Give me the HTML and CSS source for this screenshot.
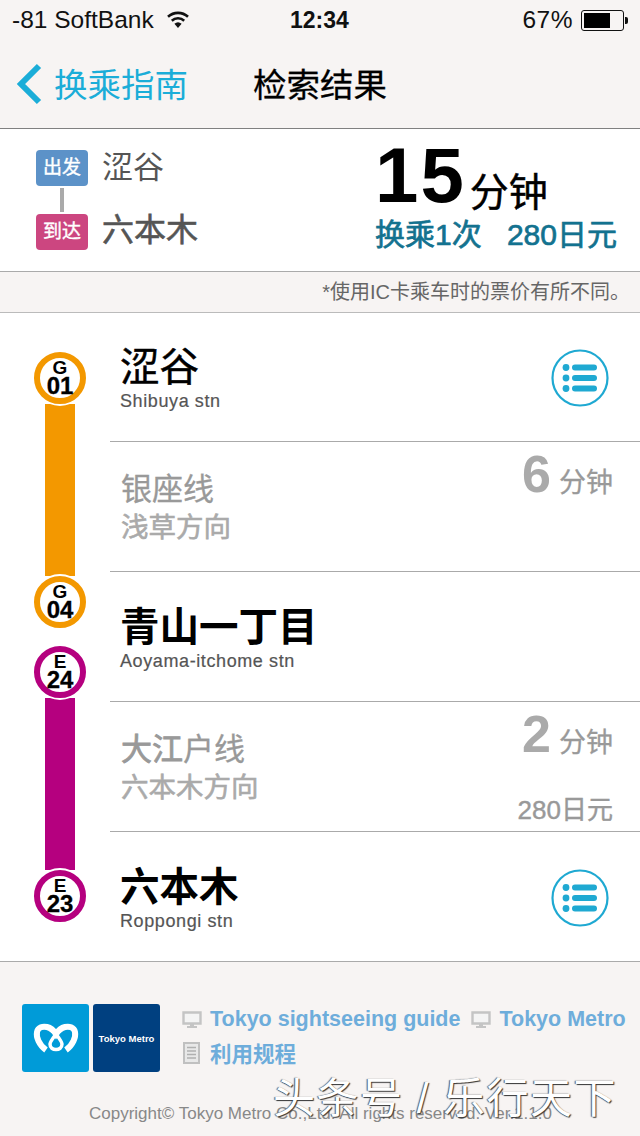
FILE: index.html
```html
<!DOCTYPE html>
<html lang="en">
<head>
    <meta charset="UTF-8">
    <meta name="viewport" content="width=device-width, initial-scale=1.0">
    <title>检索结果</title>
    <link rel="stylesheet" href="styles.css">
</head>
<body>
<div class="page">

    <div class="status">
        <div class="status-left">
            <span>-81 SoftBank</span>
            <svg class="wifi" width="24" height="18" viewBox="0 0 24 18"><path d="M12 17l-3.6-4.2a5.4 5.4 0 0 1 7.2 0z" fill="#111"/><path d="M5.8 9.8a9 9 0 0 1 12.4 0" fill="none" stroke="#111" stroke-width="2.6"/><path d="M2 5.8a14.6 14.6 0 0 1 20 0" fill="none" stroke="#111" stroke-width="2.6"/></svg>
        </div>
        <div class="status-time">12:34</div>
        <div class="status-right">
            <span>67%</span>
            <div class="battery"><div class="battery-fill"></div></div>
            <div class="battery-tip"></div>
        </div>
    </div>

    <div class="nav">
        <div class="back">
            <svg width="28" height="42" viewBox="0 0 28 42"><path d="M24 3L6 21l18 18" fill="none" stroke="#1badd8" stroke-width="6"/></svg>
            <span>换乘指南</span>
        </div>
        <div class="nav-title">检索结果</div>
    </div>

    <div class="summary">
        <div class="stops">
            <div class="stop">
                <span class="tag tag-dep">出发</span>
                <span class="stop-name light">涩谷</span>
            </div>
            <div class="stop-link"></div>
            <div class="stop">
                <span class="tag tag-arr">到达</span>
                <span class="stop-name">六本木</span>
            </div>
        </div>
        <div class="totals">
            <div class="total-time"><span class="total-num">15</span><span class="total-unit">分钟</span></div>
            <div class="total-info"><span>换乘1次</span><span>280日元</span></div>
        </div>
    </div>

    <div class="note">*使用IC卡乘车时的票价有所不同。</div>

    <div class="route">
        <div class="rail">
            <div class="badge badge-g"><span>G</span><span>01</span></div>
            <div class="line line-g"></div>
            <div class="badge badge-g"><span>G</span><span>04</span></div>
            <div class="badge badge-e badge-next"><span>E</span><span>24</span></div>
            <div class="line line-e"></div>
            <div class="badge badge-e"><span>E</span><span>23</span></div>
        </div>
        <div class="rows">
            <div class="row station">
                <div class="station-name">涩谷</div>
                <div class="station-en">Shibuya stn</div>
                <svg class="list-btn" width="60" height="60" viewBox="0 0 60 60"><circle cx="30" cy="30" r="27.5" fill="#fff" stroke="#1fa9d2" stroke-width="2.2"/><g fill="#1fa9d2"><circle cx="16" cy="19.5" r="3.4"/><circle cx="16" cy="30" r="3.4"/><circle cx="16" cy="40.5" r="3.4"/><rect x="22" y="16.5" width="25" height="6" rx="3"/><rect x="22" y="27" width="25" height="6" rx="3"/><rect x="22" y="37.5" width="25" height="6" rx="3"/></g></svg>
            </div>
            <div class="row leg">
                <div class="leg-name">银座线</div>
                <div class="leg-dir">浅草方向</div>
                <div class="leg-time"><span class="leg-num">6</span><span class="leg-unit">分钟</span></div>
            </div>
            <div class="row station">
                <div class="station-name strong">青山一丁目</div>
                <div class="station-en">Aoyama-itchome stn</div>
            </div>
            <div class="row leg">
                <div class="leg-name"><span class="leg-strong">大江</span>户线</div>
                <div class="leg-dir">六本木方向</div>
                <div class="leg-time"><span class="leg-num">2</span><span class="leg-unit">分钟</span></div>
                <div class="leg-fare">280日元</div>
            </div>
            <div class="row station">
                <div class="station-name strong">六本木</div>
                <div class="station-en">Roppongi stn</div>
                <svg class="list-btn" width="60" height="60" viewBox="0 0 60 60"><circle cx="30" cy="30" r="27.5" fill="#fff" stroke="#1fa9d2" stroke-width="2.2"/><g fill="#1fa9d2"><circle cx="16" cy="19.5" r="3.4"/><circle cx="16" cy="30" r="3.4"/><circle cx="16" cy="40.5" r="3.4"/><rect x="22" y="16.5" width="25" height="6" rx="3"/><rect x="22" y="27" width="25" height="6" rx="3"/><rect x="22" y="37.5" width="25" height="6" rx="3"/></g></svg>
            </div>
        </div>
    </div>

    <div class="footer">
        <div class="footer-top">
            <div class="logos">
                <div class="logo logo-mark">
                    <svg width="46" height="30" viewBox="0 0 46 30"><path d="M13 27C6 22 3 14 4 9 5 4 10 3 14 4c4 1 7 4 9 7 2-3 5-6 9-7 4-1 9 0 10 5 1 5-2 13-9 18" fill="none" stroke="#fff" stroke-width="6"/><path d="M23 11c-3 4-6 8-6 10 0 4 3 5.500 6 5.500s6-1.500 6-5.500c0-2-3-6-6-10z" fill="none" stroke="#fff" stroke-width="3.500"/></svg>
                </div>
                <div class="logo logo-name">Tokyo Metro</div>
            </div>
            <div class="links">
                <div class="link-row">
                    <svg class="icon" width="20" height="18" viewBox="0 0 20 18"><path d="M1.500 1.500h17v11h-17z" fill="#f4f4f4" stroke="#c4c4c4" stroke-width="2.400"/><path d="M8 13h4v2h3v2H5v-2h3z" fill="#c4c4c4"/></svg>
                    <span class="link">Tokyo sightseeing guide</span>
                    <svg class="icon" width="20" height="18" viewBox="0 0 20 18"><path d="M1.500 1.500h17v11h-17z" fill="#f4f4f4" stroke="#c4c4c4" stroke-width="2.400"/><path d="M8 13h4v2h3v2H5v-2h3z" fill="#c4c4c4"/></svg>
                    <span class="link">Tokyo Metro</span>
                </div>
                <div class="link-row">
                    <svg class="icon" width="20" height="22" viewBox="0 0 20 22"><path d="M2 1h15v20H2z" fill="#e8e8e8" stroke="#c0c0c0" stroke-width="2"/><path d="M5 5.500h9M5 9h9M5 12.500h9M5 16h9" stroke="#b0b0b0" stroke-width="1.600"/></svg>
                    <span class="link">利用规程</span>
                </div>
            </div>
        </div>
        <div class="copyright">Copyright© Tokyo Metro Co.,Ltd. All rights reserved. Ver.1.1.0</div>
    </div>

    <div class="watermark">头条号 / 乐行天下</div>
</div>
</body>
</html>
```

FILE: styles.css
```css
* {
    box-sizing: border-box;
}
html, body {
    margin: 0;
    padding: 0;
}
body {
    font-family: "Liberation Sans", "Noto Sans CJK SC", sans-serif;
    color: #000;
    background: #fff;
}
.page {
    position: relative;
    width: 640px;
    height: 1136px;
    overflow: hidden;
}

/* status bar + nav */
.status {
    height: 40px;
    padding: 0 12px 0 12px;
    display: flex;
    align-items: center;
    justify-content: space-between;
    position: relative;
    background: #f7f4f3;
    font-size: 24.500px;
    color: #111;
}
.status-left, .status-right {
    display: flex;
    align-items: center;
}
.wifi {
    margin-left: 12px;
}
.status-time {
    position: absolute;
    left: 290px;
    top: 7px;
    font-size: 23px;
    font-weight: bold;
}
.status-right span {
    margin-right: 8px;
    letter-spacing: 0.5px;
}
.battery {
    width: 43px;
    height: 21px;
    border: 1.500px solid #111;
    border-radius: 3px;
    padding: 2px;
}
.battery-fill {
    width: 26px;
    height: 100%;
    background: #000;
}
.battery-tip {
    width: 3px;
    height: 7px;
    margin-left: 1px;
    background: #111;
    border-radius: 0 2px 2px 0;
}
.nav {
    height: 89px;
    padding: 0 0 0 15px;
    display: flex;
    align-items: center;
    position: relative;
    background: #f7f4f3;
    border-bottom: 1px solid #808080;
}
.back {
    display: flex;
    align-items: center;
    gap: 11px;
    color: #1badd8;
    font-size: 33.500px;
}
.back span {
    margin-top: -4px;
}
.nav-title {
    position: absolute;
    left: 253px;
    top: 25px;
    font-size: 33.500px;
    line-height: 42px;
    -webkit-text-stroke: 0.3px #000;
}

/* summary */
.summary {
    height: 142px;
    display: flex;
    justify-content: space-between;
    padding: 21px 23px 0 36px;
}
.stop {
    display: flex;
    align-items: center;
    height: 36px;
}
.stop-link {
    width: 4px;
    height: 28px;
    margin: 0 0 0 24px;
    padding: 2px 0;
    background: #aaa;
    background-clip: content-box;
}
.tag {
    width: 52px;
    height: 36px;
    border-radius: 4px;
    color: #fff;
    font-size: 19px;
    line-height: 35px;
    text-align: center;
    -webkit-text-stroke: 0.4px #fff;
}
.tag-dep {
    background: #5c92c8;
}
.tag-arr {
    background: #cc4680;
}
.stop-name {
    margin: -5px 0 0 14px;
    font-size: 32px;
    line-height: 40px;
    color: #555;
    -webkit-text-stroke: 0.6px #555;
}
.stop-name.light {
    margin-top: 0;
    font-size: 31px;
    -webkit-text-stroke: 0;
}
.totals {
    width: 242px;
    margin-top: -10px;
}
.total-time {
    display: flex;
    align-items: flex-end;
    height: 74px;
}
.total-num {
    font-size: 78px;
    line-height: 78px;
    font-weight: bold;
    letter-spacing: 2px;
}
.total-unit {
    font-size: 39px;
    line-height: 46px;
    margin-left: 4px;
    margin-bottom: -2px;
    -webkit-text-stroke: 0.5px #000;
}
.total-info {
    display: flex;
    justify-content: space-between;
    margin-top: 3px;
    font-size: 30px;
    line-height: 36px;
    color: #13728f;
    -webkit-text-stroke: 0.7px #13728f;
}

/* fare note */
.note {
    height: 42px;
    padding-right: 10px;
    background: #f7f4f3;
    border-top: 1px solid #aaa;
    border-bottom: 1px solid #bbb;
    font-size: 20px;
    line-height: 40px;
    text-align: right;
    color: #666;
}

/* route */
.route {
    display: flex;
    height: 649px;
    border-bottom: 1px solid #aaa;
}
.rail {
    width: 110px;
    padding: 39px 0 0 34px;
}
.badge {
    position: relative;
    z-index: 1;
    width: 52px;
    height: 52px;
    border-radius: 50%;
    border: 6px solid #f39800;
    background: #fff;
    box-shadow: 0 0 0 2px #fff;
    display: flex;
    flex-direction: column;
    align-items: center;
    font-weight: bold;
    font-size: 19px;
    line-height: 17px;
    padding-top: 1px;
}
.badge span:last-child {
    font-size: 24px;
    line-height: 20px;
    -webkit-text-stroke: 0.3px #000;
}
.badge-e {
    border-color: #b5007f;
}
.badge-next {
    margin-top: 18px;
}
.line {
    width: 30px;
    height: 172px;
    margin-left: 11px;
}
.line-g {
    background: #f39800;
}
.line-e {
    background: #b5007f;
}
.rows {
    flex: 1;
}
.row {
    position: relative;
    height: 130px;
    border-bottom: 1px solid #aaa;
}
.row:first-child {
    height: 129px;
    padding-top: 30px;
}
.row:last-child {
    border-bottom: 0;
}
.station {
    padding: 31px 0 0 10px;
}
.station-name {
    font-size: 39.500px;
    line-height: 48px;
    -webkit-text-stroke: 0.5px #000;
}
.station-name.strong {
    font-weight: bold;
    -webkit-text-stroke: 0;
}
.station-en {
    font-size: 18px;
    letter-spacing: 0.6px;
    line-height: 20px;
    color: #555;
    -webkit-text-stroke: 0.2px #555;
}
.list-btn {
    position: absolute;
    right: 30px;
    top: 35px;
}
.row:last-child .list-btn {
    top: 36px;
}
.leg {
    padding: 28px 0 0 11px;
    color: #999;
}
.leg-name {
    font-size: 31px;
    line-height: 40px;
    -webkit-text-stroke: 0.3px #999;
}
.leg-strong {
    -webkit-text-stroke: 0.8px #999;
}
.leg-dir {
    font-size: 27.500px;
    line-height: 36px;
    color: #aaa;
    -webkit-text-stroke: 0.6px #aaa;
}
.leg-time {
    position: absolute;
    right: 27px;
    top: 2px;
    display: flex;
    align-items: baseline;
    color: #aaa;
}
.leg-num {
    font-size: 52px;
    line-height: 60px;
    font-weight: bold;
}
.leg-unit {
    margin-left: 8px;
    font-size: 27px;
    color: #999;
    -webkit-text-stroke: 0.3px #999;
}
.leg-fare {
    position: absolute;
    right: 27px;
    top: 93px;
    font-size: 26px;
    line-height: 30px;
    -webkit-text-stroke: 0.4px #999;
}

/* footer */
.footer {
    height: 174px;
    padding: 42px 0 0 22px;
    background: #f7f4f3;
}
.footer-top {
    display: flex;
}
.logos {
    display: flex;
    gap: 4px;
}
.logo {
    width: 67px;
    height: 68px;
    border-radius: 3px;
    display: flex;
    align-items: center;
    justify-content: center;
}
.logo-mark {
    background: #009bd8;
}
.logo-name {
    background: #004080;
    color: #fff;
    font-size: 9.500px;
    font-weight: bold;
    white-space: nowrap;
}
.links {
    margin: -2px 0 0 22px;
}
.link-row {
    display: flex;
    align-items: center;
    height: 35px;
    white-space: nowrap;
}
.link-row + .link-row {
    margin-top: -2px;
}
.link-row .icon {
    margin-right: 8px;
}
.link {
    font-size: 21.500px;
    font-weight: bold;
    color: #6eaddb;
    margin-right: 11px;
}
.copyright {
    margin-top: 32px;
    padding-left: 67px;
    font-size: 17px;
    line-height: 20px;
    color: #888;
    white-space: nowrap;
}
.watermark {
    position: absolute;
    left: 273px;
    top: 1074px;
    font-size: 42px;
    line-height: 50px;
    letter-spacing: 1.500px;
    white-space: nowrap;
    color: #fff;
    text-shadow: 1px 1px 1px #333, -1px 0 1px #555;
}
```
